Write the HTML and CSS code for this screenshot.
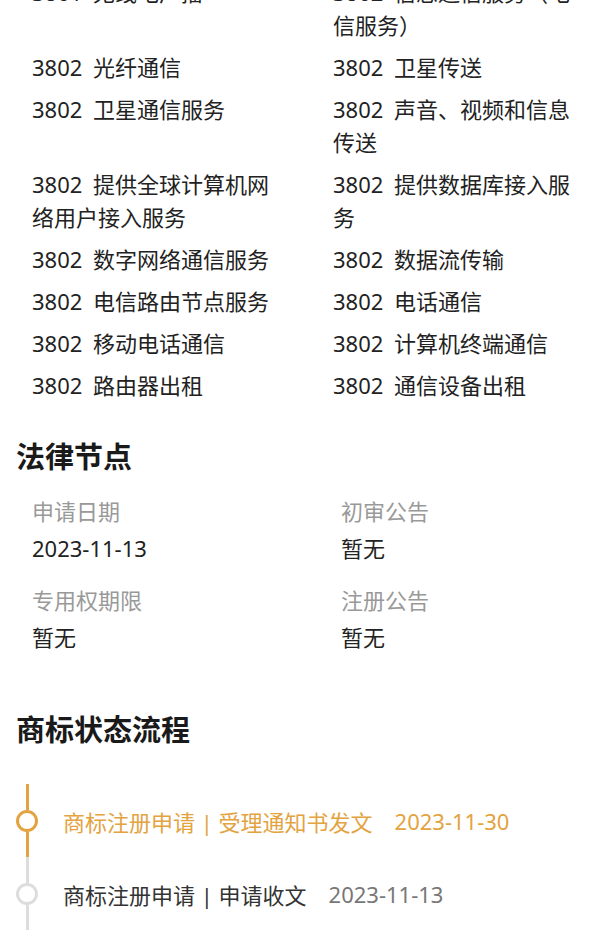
FILE: index.html
```html
<!DOCTYPE html>
<html lang="zh-CN">
<head>
    <meta charset="UTF-8">
    <meta name="viewport" content="width=device-width, initial-scale=1.0">
    <title>商标详情</title>
    <link rel="stylesheet" href="styles.css">
</head>
<body>
    <div class="page">
        <div class="goods-list">
            <div class="goods-item">3801 无线电广播</div>
            <div class="goods-item">3802 信息通信服务（电信服务）</div>
            <div class="goods-item">3802 光纤通信</div>
            <div class="goods-item">3802 卫星传送</div>
            <div class="goods-item">3802 卫星通信服务</div>
            <div class="goods-item">3802 声音、视频和信息传送</div>
            <div class="goods-item">3802 提供全球计算机网络用户接入服务</div>
            <div class="goods-item">3802 提供数据库接入服务</div>
            <div class="goods-item">3802 数字网络通信服务</div>
            <div class="goods-item">3802 数据流传输</div>
            <div class="goods-item">3802 电信路由节点服务</div>
            <div class="goods-item">3802 电话通信</div>
            <div class="goods-item">3802 移动电话通信</div>
            <div class="goods-item">3802 计算机终端通信</div>
            <div class="goods-item">3802 路由器出租</div>
            <div class="goods-item">3802 通信设备出租</div>
        </div>

        <h2 class="section-title">法律节点</h2>
        <div class="legal">
            <div class="legal-cell">
                <div class="legal-label">申请日期</div>
                <div class="legal-value">2023-11-13</div>
            </div>
            <div class="legal-cell">
                <div class="legal-label">初审公告</div>
                <div class="legal-value">暂无</div>
            </div>
            <div class="legal-cell">
                <div class="legal-label">专用权期限</div>
                <div class="legal-value">暂无</div>
            </div>
            <div class="legal-cell">
                <div class="legal-label">注册公告</div>
                <div class="legal-value">暂无</div>
            </div>
        </div>

        <h2 class="section-title flow-title">商标状态流程</h2>
        <div class="timeline">
            <div class="tl-item active">
                <div class="rail"><span class="seg"></span><span class="dot"></span><span class="seg"></span></div>
                <div class="tl-text">商标注册申请 | 受理通知书发文<span class="tl-date">2023-11-30</span></div>
            </div>
            <div class="tl-item">
                <div class="rail"><span class="seg"></span><span class="dot"></span><span class="seg"></span></div>
                <div class="tl-text">商标注册申请 | 申请收文<span class="tl-date">2023-11-13</span></div>
            </div>
        </div>
    </div>
</body>
</html>
```

FILE: styles.css
```css
body {
    margin: 0;
    padding: 0;
    background-color: #fff;
    color: #222;
    font-family: "Noto Sans", "Noto Sans CJK SC", sans-serif;
}
.page {
    width: 600px;
    overflow: hidden;
}
.goods-list {
    display: grid;
    grid-template-columns: 301px 299px;
    row-gap: 9px;
    margin-top: -24.5px;
}
.goods-item {
    padding: 0 23px 0 32px;
    font-size: 22px;
    line-height: 33px;
    word-spacing: 5px;
}
.section-title {
    margin: 35.5px 0 17.5px;
    padding-left: 16px;
    font-size: 29px;
    line-height: 40px;
    font-weight: 700;
    color: #1a1a1a;
}
.flow-title {
    margin-top: 56.5px;
    margin-bottom: 34px;
}
.legal {
    display: grid;
    grid-template-columns: 309px 1fr;
    row-gap: 19px;
    padding-left: 32px;
}
.legal-label {
    font-size: 22px;
    line-height: 33px;
    color: #999;
    margin-bottom: 4px;
}
.legal-value {
    font-size: 22px;
    line-height: 33px;
}
.tl-item {
    display: flex;
    height: 73px;
    color: #333;
}
.rail {
    width: 54px;
    display: flex;
    flex-direction: column;
    align-items: center;
}
.seg {
    flex: 1;
    width: 3px;
    background-color: #ddd;
}
.dot {
    width: 16px;
    height: 16px;
    border: 3px solid #ddd;
    border-radius: 50%;
    background-color: #fff;
}
.tl-text {
    display: flex;
    align-items: center;
    margin-left: 9px;
    font-size: 22px;
}
.tl-date {
    margin-left: 22px;
    color: #777;
}
.tl-item.active {
    color: #e3a33f;
}
.tl-item.active .seg {
    background-color: #e3a33f;
}
.tl-item.active .dot {
    border-color: #e3a33f;
}
.tl-item.active .tl-date {
    color: #e3a33f;
}
```
